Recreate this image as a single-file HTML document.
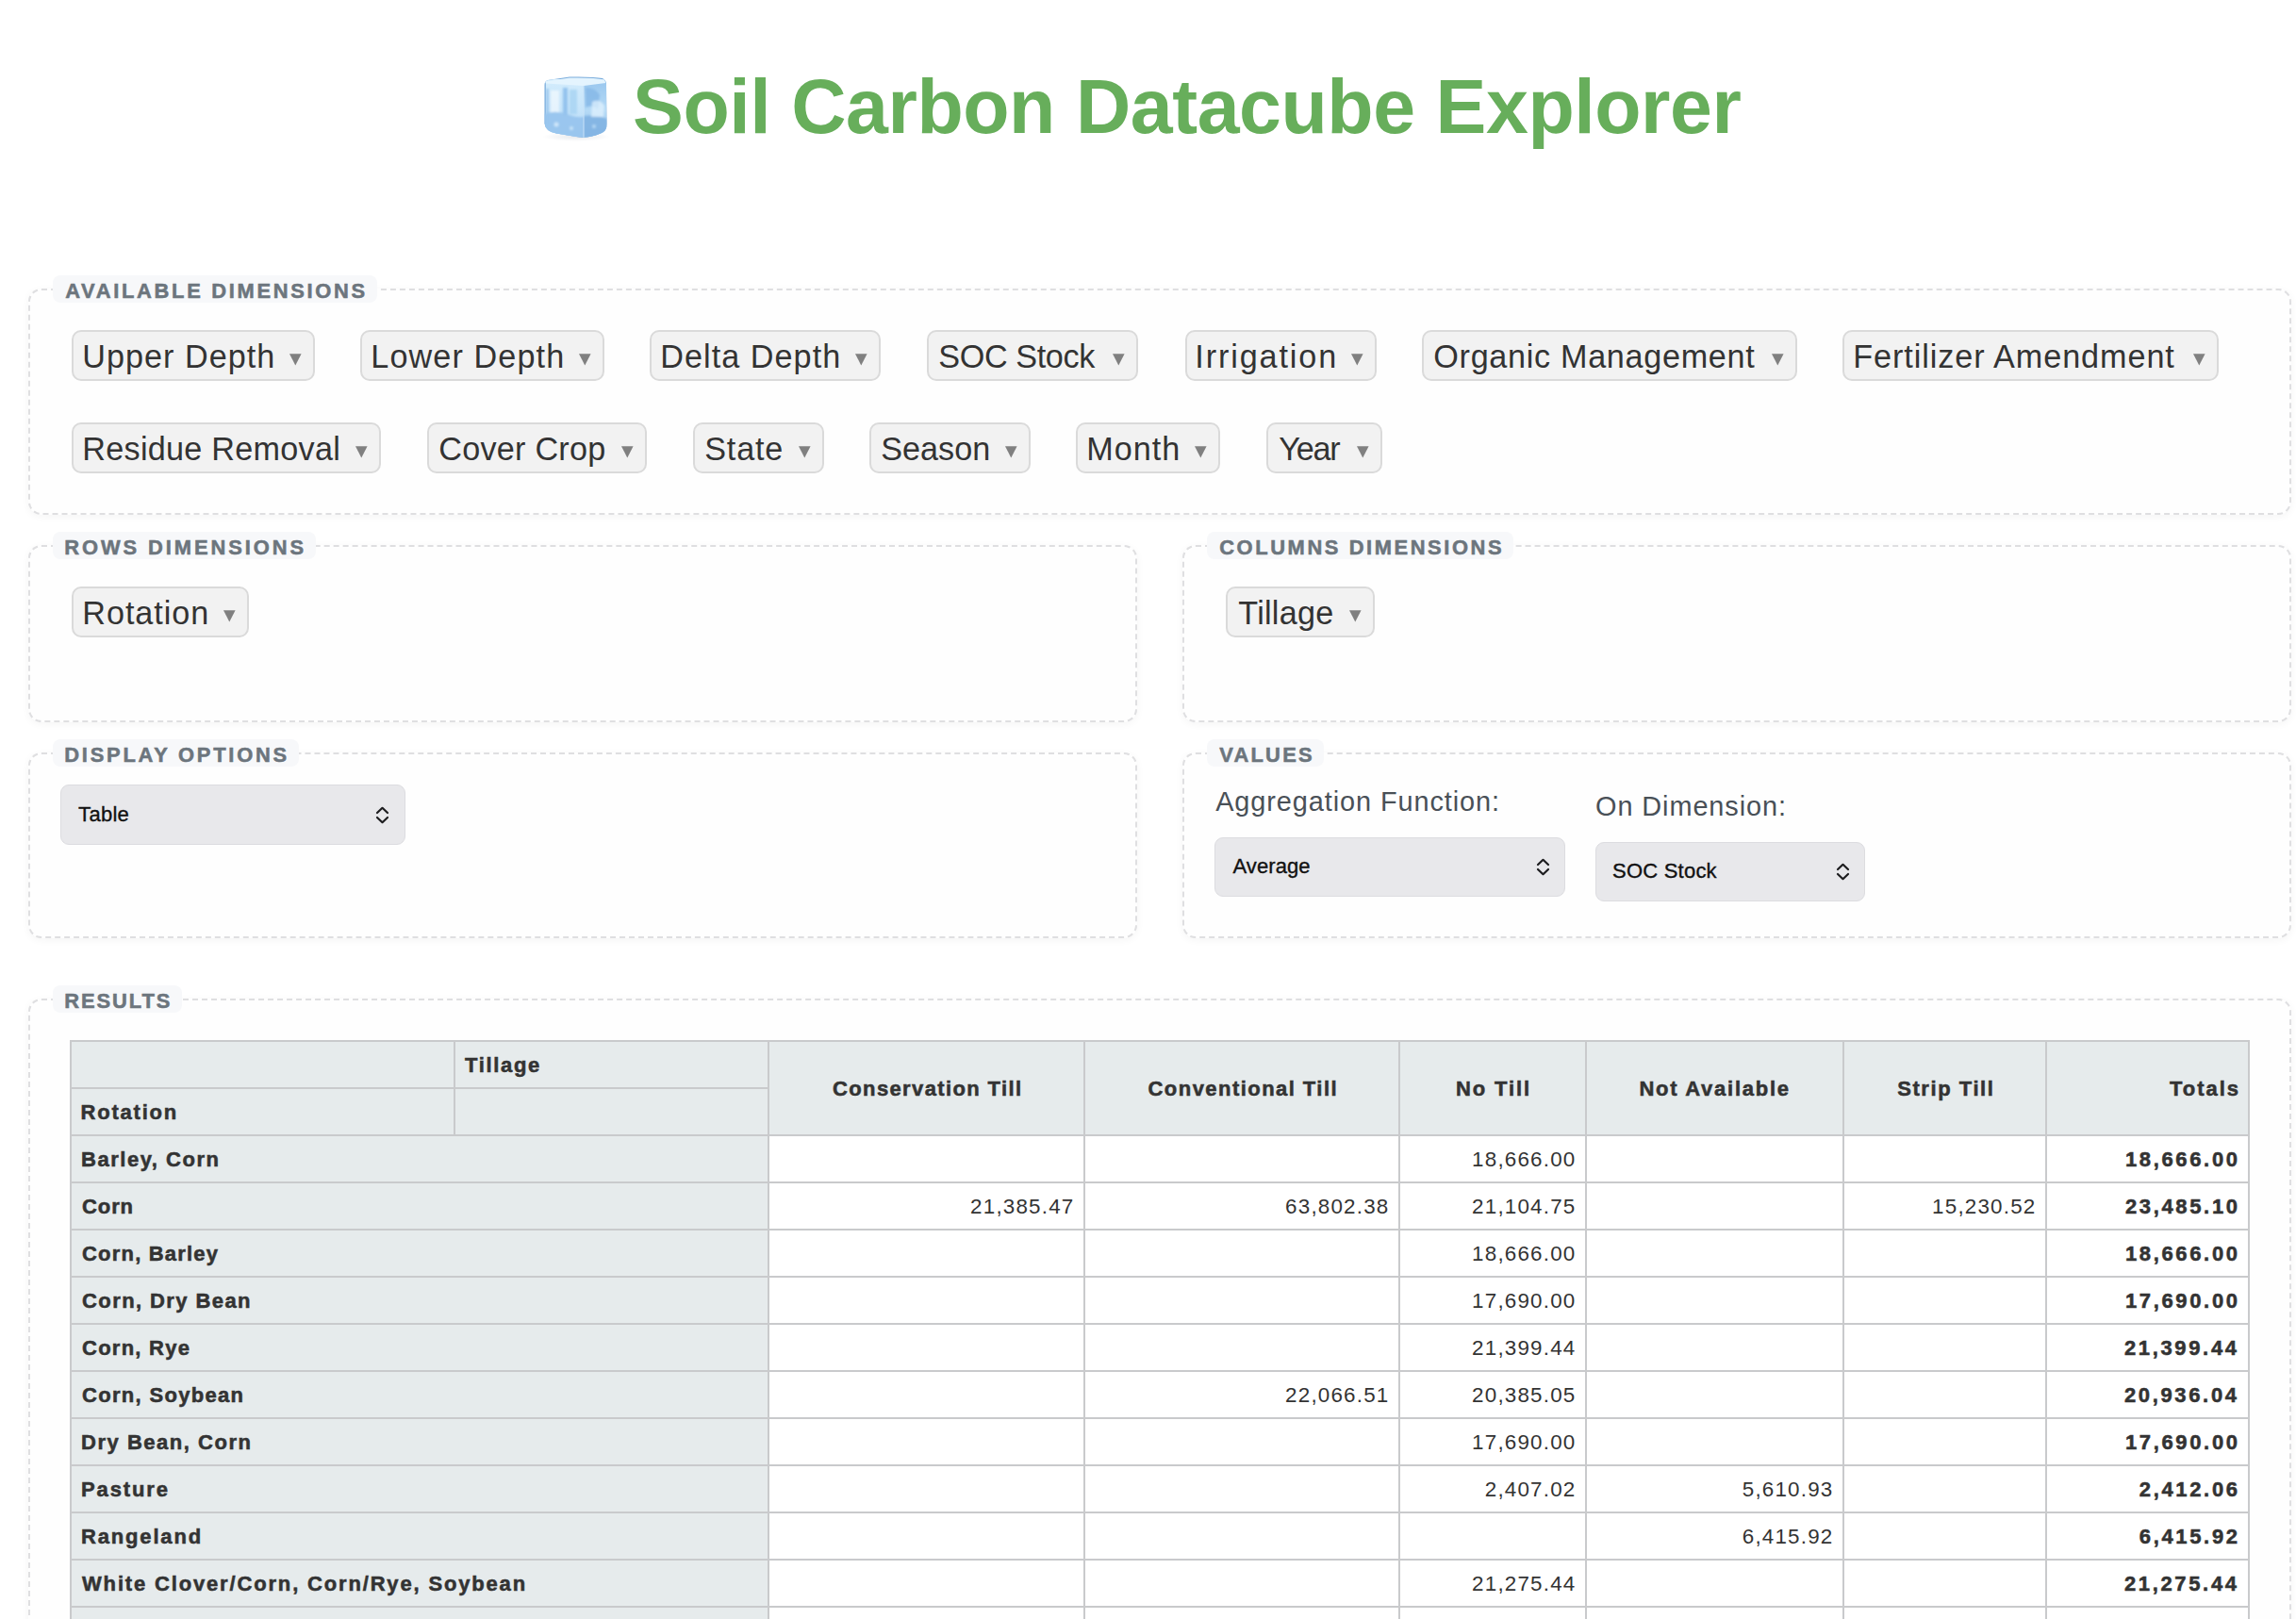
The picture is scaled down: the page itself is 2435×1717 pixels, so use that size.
<!DOCTYPE html>
<html><head><meta charset="utf-8"><title>Soil Carbon Datacube Explorer</title>
<style>
html,body{margin:0;padding:0;background:#fff;width:2435px;height:1717px;overflow:hidden;position:relative;}
body{font-family:"Liberation Sans",sans-serif;}
.t{position:absolute;line-height:1;white-space:nowrap;}
</style></head><body>
<svg style="position:absolute;left:560px;top:70px" width="100" height="90" viewBox="560 70 100 90">
<defs>
<linearGradient id="gf" x1="0" y1="0" x2="0" y2="1"><stop offset="0" stop-color="#d3ecfc"/><stop offset="0.55" stop-color="#c6e4fa"/><stop offset="1" stop-color="#b0d6f4"/></linearGradient>
<linearGradient id="gs" x1="0" y1="0" x2="0" y2="1"><stop offset="0" stop-color="#98c6ee"/><stop offset="0.55" stop-color="#b5daf6"/><stop offset="1" stop-color="#94c2eb"/></linearGradient>
<radialGradient id="gsh" cx="0.5" cy="0.5" r="0.5"><stop offset="0" stop-color="#6d7d90" stop-opacity="0.16"/><stop offset="1" stop-color="#6d7d90" stop-opacity="0"/></radialGradient>
<filter id="bl" x="-20%" y="-20%" width="140%" height="140%"><feGaussianBlur stdDeviation="1.3"/></filter>
<filter id="bl2" x="-10%" y="-10%" width="120%" height="120%"><feGaussianBlur stdDeviation="0.4"/></filter>
<clipPath id="cp"><path d="M577.5 90 Q577.5 86 581 85 L604 81.5 Q630 81 639 83 Q643 85 643 90 L643.5 131 Q644 139 637 141.5 Q626 146.5 614 145.5 L590 141.5 Q578.5 139.5 577.5 131 Z"/></clipPath>
</defs>
<ellipse cx="611" cy="145" rx="36" ry="5" fill="url(#gsh)"/>
<g filter="url(#bl2)">
<path d="M577.5 90 Q577.5 86 581 85 L604 81.5 Q630 81 639 83 Q643 85 643 90 L643.5 131 Q644 139 637 141.5 Q626 146.5 614 145.5 L590 141.5 Q578.5 139.5 577.5 131 Z" fill="#79acdc"/>
<g clip-path="url(#cp)">
<rect x="578.8" y="84" width="40" height="61" fill="url(#gf)"/>
<rect x="619" y="84" width="24" height="61" fill="url(#gs)"/>
<path d="M578 86.5 L604 82.5 Q630 82 641 84.5 L642.3 88 L619 91 L579 88.5 Z" fill="#e4f4fe"/>
<g filter="url(#bl)">
<rect x="597" y="93" width="5" height="30" fill="#8fc0ec" opacity="0.9"/>
<rect x="604" y="95" width="8" height="26" fill="#a8d3f3" opacity="0.8"/>
<rect x="584" y="96" width="9" height="24" fill="#ffffff" opacity="0.55"/>
<rect x="579" y="94" width="3" height="40" fill="#8fbde8" opacity="0.7"/>
<path d="M577 121 Q590 116 604 122 Q612 125 619 124 L619 146 L577 146 Z" fill="#98c5ee" opacity="0.95"/>
<path d="M619 123 Q630 121 644 126 L644 146 L619 146 Z" fill="#83b4e4" opacity="0.95"/>
<path d="M621 93 Q632 93 636 101 L634 116 Q628 110 621 114 Z" fill="#86b8e8" opacity="0.85"/>
<path d="M628 108 Q636 104 641 112 L640 124 L627 124 Z" fill="#e0f1fd" opacity="0.75"/>
<circle cx="590" cy="132" r="2.5" fill="#d8eefd" opacity="0.8"/>
<circle cx="606" cy="136" r="2" fill="#d8eefd" opacity="0.7"/>
<circle cx="630" cy="134" r="2" fill="#c6e4fa" opacity="0.7"/>
</g>
<rect x="618.3" y="90" width="1.3" height="56" fill="#e3f3ff" opacity="0.55"/>
</g>
</g>
</svg>

<div class="t" style="left:671.00px;top:73.17px;font-size:80.7px;font-weight:700;color:#67ae5b;letter-spacing:-0.438px;">Soil Carbon Datacube Explorer</div>
<div style="position:absolute;left:30px;top:306px;width:2400px;height:240px;border:2px dashed #dfdfe1;border-radius:14px;box-shadow:0 2px 8px rgba(0,0,0,0.045);box-sizing:border-box;background:#fefefe;"></div>
<div style="position:absolute;left:55.8px;top:291.8px;width:344.0px;height:29.5px;background:#f7f8fa;border-radius:8px;"></div>
<div class="t" style="left:69.20px;top:297.96px;font-size:21.9px;font-weight:700;color:#6c757d;letter-spacing:2.698px;-webkit-text-stroke:0.55px #6c757d;">AVAILABLE DIMENSIONS</div>
<div style="position:absolute;left:30px;top:578px;width:1176px;height:188px;border:2px dashed #dfdfe1;border-radius:14px;box-shadow:0 2px 8px rgba(0,0,0,0.045);box-sizing:border-box;background:#fefefe;"></div>
<div style="position:absolute;left:55.8px;top:563.8px;width:279.0px;height:29.5px;background:#f7f8fa;border-radius:8px;"></div>
<div class="t" style="left:68.20px;top:569.96px;font-size:21.9px;font-weight:700;color:#6c757d;letter-spacing:2.940px;-webkit-text-stroke:0.55px #6c757d;">ROWS DIMENSIONS</div>
<div style="position:absolute;left:1254px;top:578px;width:1176px;height:188px;border:2px dashed #dfdfe1;border-radius:14px;box-shadow:0 2px 8px rgba(0,0,0,0.045);box-sizing:border-box;background:#fefefe;"></div>
<div style="position:absolute;left:1279.8px;top:563.8px;width:325.4000000000001px;height:29.5px;background:#f7f8fa;border-radius:8px;"></div>
<div class="t" style="left:1293.20px;top:569.96px;font-size:21.9px;font-weight:700;color:#6c757d;letter-spacing:2.588px;-webkit-text-stroke:0.55px #6c757d;">COLUMNS DIMENSIONS</div>
<div style="position:absolute;left:30px;top:798px;width:1176px;height:197px;border:2px dashed #dfdfe1;border-radius:14px;box-shadow:0 2px 8px rgba(0,0,0,0.045);box-sizing:border-box;background:#fefefe;"></div>
<div style="position:absolute;left:55.8px;top:783.8px;width:261.4px;height:29.5px;background:#f7f8fa;border-radius:8px;"></div>
<div class="t" style="left:68.20px;top:789.96px;font-size:21.9px;font-weight:700;color:#6c757d;letter-spacing:2.781px;-webkit-text-stroke:0.55px #6c757d;">DISPLAY OPTIONS</div>
<div style="position:absolute;left:1254px;top:798px;width:1176px;height:197px;border:2px dashed #dfdfe1;border-radius:14px;box-shadow:0 2px 8px rgba(0,0,0,0.045);box-sizing:border-box;background:#fefefe;"></div>
<div style="position:absolute;left:1279.8px;top:783.8px;width:124.40000000000009px;height:29.5px;background:#f7f8fa;border-radius:8px;"></div>
<div class="t" style="left:1293.20px;top:789.96px;font-size:21.9px;font-weight:700;color:#6c757d;letter-spacing:2.247px;-webkit-text-stroke:0.55px #6c757d;">VALUES</div>
<div style="position:absolute;left:30px;top:1059px;width:2400px;height:741px;border:2px dashed #dfdfe1;border-radius:14px;box-shadow:0 2px 8px rgba(0,0,0,0.045);box-sizing:border-box;background:#fefefe;"></div>
<div style="position:absolute;left:55.8px;top:1044.8px;width:137.2px;height:29.5px;background:#f7f8fa;border-radius:8px;"></div>
<div class="t" style="left:68.20px;top:1050.96px;font-size:21.9px;font-weight:700;color:#6c757d;letter-spacing:1.944px;-webkit-text-stroke:0.55px #6c757d;">RESULTS</div>
<div style="position:absolute;left:76px;top:350px;width:258px;height:54px;background:#f2f2f2;border:2px solid #dadada;border-radius:10px;box-sizing:border-box;"></div>
<div class="t" style="left:87.30px;top:361.04px;font-size:34.2px;font-weight:400;color:#333;letter-spacing:1.007px;">Upper Depth</div>
<svg style="position:absolute;left:306.70px;top:375.30px" width="13" height="13" viewBox="0 0 13 13"><polygon points="0,0.3 12.6,0.3 6.3,12.5" fill="#808080"/></svg>
<div style="position:absolute;left:382px;top:350px;width:259px;height:54px;background:#f2f2f2;border:2px solid #dadada;border-radius:10px;box-sizing:border-box;"></div>
<div class="t" style="left:393.30px;top:361.04px;font-size:34.2px;font-weight:400;color:#333;letter-spacing:1.107px;">Lower Depth</div>
<svg style="position:absolute;left:613.70px;top:375.30px" width="13" height="13" viewBox="0 0 13 13"><polygon points="0,0.3 12.6,0.3 6.3,12.5" fill="#808080"/></svg>
<div style="position:absolute;left:689px;top:350px;width:245px;height:54px;background:#f2f2f2;border:2px solid #dadada;border-radius:10px;box-sizing:border-box;"></div>
<div class="t" style="left:700.30px;top:361.04px;font-size:34.2px;font-weight:400;color:#333;letter-spacing:1.038px;">Delta Depth</div>
<svg style="position:absolute;left:906.70px;top:375.30px" width="13" height="13" viewBox="0 0 13 13"><polygon points="0,0.3 12.6,0.3 6.3,12.5" fill="#808080"/></svg>
<div style="position:absolute;left:983px;top:350px;width:224px;height:54px;background:#f2f2f2;border:2px solid #dadada;border-radius:10px;box-sizing:border-box;"></div>
<div class="t" style="left:995.30px;top:361.04px;font-size:34.2px;font-weight:400;color:#333;letter-spacing:-0.386px;">SOC Stock</div>
<svg style="position:absolute;left:1179.70px;top:375.30px" width="13" height="13" viewBox="0 0 13 13"><polygon points="0,0.3 12.6,0.3 6.3,12.5" fill="#808080"/></svg>
<div style="position:absolute;left:1257px;top:350px;width:203px;height:54px;background:#f2f2f2;border:2px solid #dadada;border-radius:10px;box-sizing:border-box;"></div>
<div class="t" style="left:1267.30px;top:361.04px;font-size:34.2px;font-weight:400;color:#333;letter-spacing:1.878px;">Irrigation</div>
<svg style="position:absolute;left:1432.70px;top:375.30px" width="13" height="13" viewBox="0 0 13 13"><polygon points="0,0.3 12.6,0.3 6.3,12.5" fill="#808080"/></svg>
<div style="position:absolute;left:1508px;top:350px;width:398px;height:54px;background:#f2f2f2;border:2px solid #dadada;border-radius:10px;box-sizing:border-box;"></div>
<div class="t" style="left:1520.30px;top:361.04px;font-size:34.2px;font-weight:400;color:#333;letter-spacing:0.685px;">Organic Management</div>
<svg style="position:absolute;left:1878.70px;top:375.30px" width="13" height="13" viewBox="0 0 13 13"><polygon points="0,0.3 12.6,0.3 6.3,12.5" fill="#808080"/></svg>
<div style="position:absolute;left:1954px;top:350px;width:399px;height:54px;background:#f2f2f2;border:2px solid #dadada;border-radius:10px;box-sizing:border-box;"></div>
<div class="t" style="left:1965.30px;top:361.04px;font-size:34.2px;font-weight:400;color:#333;letter-spacing:0.922px;">Fertilizer Amendment</div>
<svg style="position:absolute;left:2325.70px;top:375.30px" width="13" height="13" viewBox="0 0 13 13"><polygon points="0,0.3 12.6,0.3 6.3,12.5" fill="#808080"/></svg>
<div style="position:absolute;left:76px;top:448px;width:328px;height:54px;background:#f2f2f2;border:2px solid #dadada;border-radius:10px;box-sizing:border-box;"></div>
<div class="t" style="left:87.30px;top:459.04px;font-size:34.2px;font-weight:400;color:#333;letter-spacing:0.262px;">Residue Removal</div>
<svg style="position:absolute;left:376.70px;top:473.30px" width="13" height="13" viewBox="0 0 13 13"><polygon points="0,0.3 12.6,0.3 6.3,12.5" fill="#808080"/></svg>
<div style="position:absolute;left:453px;top:448px;width:233px;height:54px;background:#f2f2f2;border:2px solid #dadada;border-radius:10px;box-sizing:border-box;"></div>
<div class="t" style="left:465.30px;top:459.04px;font-size:34.2px;font-weight:400;color:#333;letter-spacing:0.236px;">Cover Crop</div>
<svg style="position:absolute;left:658.70px;top:473.30px" width="13" height="13" viewBox="0 0 13 13"><polygon points="0,0.3 12.6,0.3 6.3,12.5" fill="#808080"/></svg>
<div style="position:absolute;left:735px;top:448px;width:139px;height:54px;background:#f2f2f2;border:2px solid #dadada;border-radius:10px;box-sizing:border-box;"></div>
<div class="t" style="left:747.30px;top:459.04px;font-size:34.2px;font-weight:400;color:#333;letter-spacing:0.772px;">State</div>
<svg style="position:absolute;left:846.70px;top:473.30px" width="13" height="13" viewBox="0 0 13 13"><polygon points="0,0.3 12.6,0.3 6.3,12.5" fill="#808080"/></svg>
<div style="position:absolute;left:922px;top:448px;width:171px;height:54px;background:#f2f2f2;border:2px solid #dadada;border-radius:10px;box-sizing:border-box;"></div>
<div class="t" style="left:934.30px;top:459.04px;font-size:34.2px;font-weight:400;color:#333;letter-spacing:-0.007px;">Season</div>
<svg style="position:absolute;left:1065.70px;top:473.30px" width="13" height="13" viewBox="0 0 13 13"><polygon points="0,0.3 12.6,0.3 6.3,12.5" fill="#808080"/></svg>
<div style="position:absolute;left:1141px;top:448px;width:153px;height:54px;background:#f2f2f2;border:2px solid #dadada;border-radius:10px;box-sizing:border-box;"></div>
<div class="t" style="left:1152.30px;top:459.04px;font-size:34.2px;font-weight:400;color:#333;letter-spacing:0.974px;">Month</div>
<svg style="position:absolute;left:1266.70px;top:473.30px" width="13" height="13" viewBox="0 0 13 13"><polygon points="0,0.3 12.6,0.3 6.3,12.5" fill="#808080"/></svg>
<div style="position:absolute;left:1343px;top:448px;width:123px;height:54px;background:#f2f2f2;border:2px solid #dadada;border-radius:10px;box-sizing:border-box;"></div>
<div class="t" style="left:1356.30px;top:459.04px;font-size:34.2px;font-weight:400;color:#333;letter-spacing:-1.263px;">Year</div>
<svg style="position:absolute;left:1438.70px;top:473.30px" width="13" height="13" viewBox="0 0 13 13"><polygon points="0,0.3 12.6,0.3 6.3,12.5" fill="#808080"/></svg>
<div style="position:absolute;left:76px;top:622px;width:188px;height:54px;background:#f2f2f2;border:2px solid #dadada;border-radius:10px;box-sizing:border-box;"></div>
<div class="t" style="left:87.30px;top:633.04px;font-size:34.2px;font-weight:400;color:#333;letter-spacing:0.940px;">Rotation</div>
<svg style="position:absolute;left:236.70px;top:647.30px" width="13" height="13" viewBox="0 0 13 13"><polygon points="0,0.3 12.6,0.3 6.3,12.5" fill="#808080"/></svg>
<div style="position:absolute;left:1300px;top:622px;width:158px;height:54px;background:#f2f2f2;border:2px solid #dadada;border-radius:10px;box-sizing:border-box;"></div>
<div class="t" style="left:1313.30px;top:633.04px;font-size:34.2px;font-weight:400;color:#333;letter-spacing:0.246px;">Tillage</div>
<svg style="position:absolute;left:1430.70px;top:647.30px" width="13" height="13" viewBox="0 0 13 13"><polygon points="0,0.3 12.6,0.3 6.3,12.5" fill="#808080"/></svg>
<div style="position:absolute;left:64px;top:832px;width:366px;height:64px;background:#e8e8eb;border:1.5px solid #dcdce0;border-radius:9px;box-sizing:border-box;"></div>
<div class="t" style="left:83.10px;top:853.27px;font-size:22px;font-weight:400;color:#111;letter-spacing:0.285px;-webkit-text-stroke:0.35px #111;">Table</div>
<svg style="position:absolute;left:398px;top:854.5px" width="15" height="19" viewBox="0 0 15 19"><path d="M2 7 L7.5 1.8 L13 7 M2 12 L7.5 17.2 L13 12" fill="none" stroke="#1d1d1f" stroke-width="2.2" stroke-linecap="round" stroke-linejoin="round"/></svg>
<div style="position:absolute;left:1288px;top:887.5px;width:371.5px;height:63.0px;background:#e8e8eb;border:1.5px solid #dcdce0;border-radius:9px;box-sizing:border-box;"></div>
<div class="t" style="left:1307.50px;top:907.97px;font-size:22px;font-weight:400;color:#111;letter-spacing:0.082px;-webkit-text-stroke:0.35px #111;">Average</div>
<svg style="position:absolute;left:1628.5px;top:909.5px" width="15" height="19" viewBox="0 0 15 19"><path d="M2 7 L7.5 1.8 L13 7 M2 12 L7.5 17.2 L13 12" fill="none" stroke="#1d1d1f" stroke-width="2.2" stroke-linecap="round" stroke-linejoin="round"/></svg>
<div style="position:absolute;left:1692px;top:892.5px;width:286px;height:63.0px;background:#e8e8eb;border:1.5px solid #dcdce0;border-radius:9px;box-sizing:border-box;"></div>
<div class="t" style="left:1710.00px;top:913.17px;font-size:22px;font-weight:400;color:#111;letter-spacing:0.224px;-webkit-text-stroke:0.35px #111;">SOC Stock</div>
<svg style="position:absolute;left:1946.5px;top:914.5px" width="15" height="19" viewBox="0 0 15 19"><path d="M2 7 L7.5 1.8 L13 7 M2 12 L7.5 17.2 L13 12" fill="none" stroke="#1d1d1f" stroke-width="2.2" stroke-linecap="round" stroke-linejoin="round"/></svg>
<div class="t" style="left:1289.20px;top:835.93px;font-size:28.9px;font-weight:400;color:#495057;letter-spacing:0.908px;">Aggregation Function:</div>
<div class="t" style="left:1692.00px;top:840.83px;font-size:28.9px;font-weight:400;color:#495057;letter-spacing:0.913px;">On Dimension:</div>
<div style="position:absolute;left:74px;top:1103px;width:2312px;height:100px;background:#e6ebec;"></div>
<div style="position:absolute;left:814px;top:1203px;width:1572px;height:514px;background:#fff;"></div>
<div style="position:absolute;left:74px;top:1203px;width:740px;height:514px;background:#e6ebec;"></div>
<div style="position:absolute;left:74px;top:1103px;width:2312px;height:2px;background:#c9cacc;"></div>
<div style="position:absolute;left:74px;top:1153px;width:740px;height:2px;background:#c9cacc;"></div>
<div style="position:absolute;left:74px;top:1203px;width:2312px;height:2px;background:#c9cacc;"></div>
<div style="position:absolute;left:74px;top:1253px;width:2312px;height:2px;background:#c9cacc;"></div>
<div style="position:absolute;left:74px;top:1303px;width:2312px;height:2px;background:#c9cacc;"></div>
<div style="position:absolute;left:74px;top:1353px;width:2312px;height:2px;background:#c9cacc;"></div>
<div style="position:absolute;left:74px;top:1403px;width:2312px;height:2px;background:#c9cacc;"></div>
<div style="position:absolute;left:74px;top:1453px;width:2312px;height:2px;background:#c9cacc;"></div>
<div style="position:absolute;left:74px;top:1503px;width:2312px;height:2px;background:#c9cacc;"></div>
<div style="position:absolute;left:74px;top:1553px;width:2312px;height:2px;background:#c9cacc;"></div>
<div style="position:absolute;left:74px;top:1603px;width:2312px;height:2px;background:#c9cacc;"></div>
<div style="position:absolute;left:74px;top:1653px;width:2312px;height:2px;background:#c9cacc;"></div>
<div style="position:absolute;left:74px;top:1703px;width:2312px;height:2px;background:#c9cacc;"></div>
<div style="position:absolute;left:74px;top:1753px;width:2312px;height:2px;background:#c9cacc;"></div>
<div style="position:absolute;left:74px;top:1103px;width:2px;height:614px;background:#c9cacc;"></div>
<div style="position:absolute;left:481px;top:1103px;width:2px;height:100px;background:#c9cacc;"></div>
<div style="position:absolute;left:814px;top:1103px;width:2px;height:614px;background:#c9cacc;"></div>
<div style="position:absolute;left:1149px;top:1103px;width:2px;height:614px;background:#c9cacc;"></div>
<div style="position:absolute;left:1483px;top:1103px;width:2px;height:614px;background:#c9cacc;"></div>
<div style="position:absolute;left:1681px;top:1103px;width:2px;height:614px;background:#c9cacc;"></div>
<div style="position:absolute;left:1954px;top:1103px;width:2px;height:614px;background:#c9cacc;"></div>
<div style="position:absolute;left:2169px;top:1103px;width:2px;height:614px;background:#c9cacc;"></div>
<div style="position:absolute;left:2384px;top:1103px;width:2px;height:614px;background:#c9cacc;"></div>
<div class="t" style="left:493.00px;top:1118.97px;font-size:22.0px;font-weight:700;color:#333;letter-spacing:1.658px;-webkit-text-stroke:0.55px #333;">Tillage</div>
<div class="t" style="left:85.50px;top:1168.97px;font-size:22.0px;font-weight:700;color:#333;letter-spacing:1.791px;-webkit-text-stroke:0.55px #333;">Rotation</div>
<div class="t" style="left:883.00px;top:1144.07px;font-size:22.0px;font-weight:700;color:#333;letter-spacing:1.377px;-webkit-text-stroke:0.55px #333;">Conservation Till</div>
<div class="t" style="left:1217.50px;top:1144.07px;font-size:22.0px;font-weight:700;color:#333;letter-spacing:1.455px;-webkit-text-stroke:0.55px #333;">Conventional Till</div>
<div class="t" style="left:1544.05px;top:1144.07px;font-size:22.0px;font-weight:700;color:#333;letter-spacing:1.866px;-webkit-text-stroke:0.55px #333;">No Till</div>
<div class="t" style="left:1738.40px;top:1144.07px;font-size:22.0px;font-weight:700;color:#333;letter-spacing:1.740px;-webkit-text-stroke:0.55px #333;">Not Available</div>
<div class="t" style="left:2012.20px;top:1144.07px;font-size:22.0px;font-weight:700;color:#333;letter-spacing:1.568px;-webkit-text-stroke:0.55px #333;">Strip Till</div>
<div class="t" style="left:2301.00px;top:1144.07px;font-size:22.0px;font-weight:700;color:#333;letter-spacing:1.956px;-webkit-text-stroke:0.55px #333;">Totals</div>
<div class="t" style="left:86.00px;top:1218.97px;font-size:22.0px;font-weight:700;color:#333;letter-spacing:1.532px;-webkit-text-stroke:0.55px #333;">Barley, Corn</div>
<div class="t" style="left:1561.12px;top:1218.63px;font-size:22.4px;font-weight:400;color:#333;letter-spacing:1.190px;">18,666.00</div>
<div class="t" style="left:2253.88px;top:1218.97px;font-size:22.0px;font-weight:700;color:#333;letter-spacing:2.660px;-webkit-text-stroke:0.55px #333;">18,666.00</div>
<div class="t" style="left:87.00px;top:1268.97px;font-size:22.0px;font-weight:700;color:#333;letter-spacing:0.904px;-webkit-text-stroke:0.55px #333;">Corn</div>
<div class="t" style="left:1029.12px;top:1268.63px;font-size:22.4px;font-weight:400;color:#333;letter-spacing:1.190px;">21,385.47</div>
<div class="t" style="left:1363.12px;top:1268.63px;font-size:22.4px;font-weight:400;color:#333;letter-spacing:1.190px;">63,802.38</div>
<div class="t" style="left:1561.12px;top:1268.63px;font-size:22.4px;font-weight:400;color:#333;letter-spacing:1.190px;">21,104.75</div>
<div class="t" style="left:2049.12px;top:1268.63px;font-size:22.4px;font-weight:400;color:#333;letter-spacing:1.190px;">15,230.52</div>
<div class="t" style="left:2253.88px;top:1268.97px;font-size:22.0px;font-weight:700;color:#333;letter-spacing:2.660px;-webkit-text-stroke:0.55px #333;">23,485.10</div>
<div class="t" style="left:87.00px;top:1318.97px;font-size:22.0px;font-weight:700;color:#333;letter-spacing:1.202px;-webkit-text-stroke:0.55px #333;">Corn, Barley</div>
<div class="t" style="left:1561.12px;top:1318.63px;font-size:22.4px;font-weight:400;color:#333;letter-spacing:1.190px;">18,666.00</div>
<div class="t" style="left:2253.88px;top:1318.97px;font-size:22.0px;font-weight:700;color:#333;letter-spacing:2.660px;-webkit-text-stroke:0.55px #333;">18,666.00</div>
<div class="t" style="left:87.00px;top:1368.97px;font-size:22.0px;font-weight:700;color:#333;letter-spacing:1.415px;-webkit-text-stroke:0.55px #333;">Corn, Dry Bean</div>
<div class="t" style="left:1561.12px;top:1368.63px;font-size:22.4px;font-weight:400;color:#333;letter-spacing:1.190px;">17,690.00</div>
<div class="t" style="left:2253.88px;top:1368.97px;font-size:22.0px;font-weight:700;color:#333;letter-spacing:2.660px;-webkit-text-stroke:0.55px #333;">17,690.00</div>
<div class="t" style="left:87.00px;top:1418.97px;font-size:22.0px;font-weight:700;color:#333;letter-spacing:1.253px;-webkit-text-stroke:0.55px #333;">Corn, Rye</div>
<div class="t" style="left:1561.12px;top:1418.63px;font-size:22.4px;font-weight:400;color:#333;letter-spacing:1.190px;">21,399.44</div>
<div class="t" style="left:2252.88px;top:1418.97px;font-size:22.0px;font-weight:700;color:#333;letter-spacing:2.660px;-webkit-text-stroke:0.55px #333;">21,399.44</div>
<div class="t" style="left:87.00px;top:1468.97px;font-size:22.0px;font-weight:700;color:#333;letter-spacing:1.308px;-webkit-text-stroke:0.55px #333;">Corn, Soybean</div>
<div class="t" style="left:1363.12px;top:1468.63px;font-size:22.4px;font-weight:400;color:#333;letter-spacing:1.190px;">22,066.51</div>
<div class="t" style="left:1561.12px;top:1468.63px;font-size:22.4px;font-weight:400;color:#333;letter-spacing:1.190px;">20,385.05</div>
<div class="t" style="left:2252.88px;top:1468.97px;font-size:22.0px;font-weight:700;color:#333;letter-spacing:2.660px;-webkit-text-stroke:0.55px #333;">20,936.04</div>
<div class="t" style="left:86.00px;top:1518.97px;font-size:22.0px;font-weight:700;color:#333;letter-spacing:1.530px;-webkit-text-stroke:0.55px #333;">Dry Bean, Corn</div>
<div class="t" style="left:1561.12px;top:1518.63px;font-size:22.4px;font-weight:400;color:#333;letter-spacing:1.190px;">17,690.00</div>
<div class="t" style="left:2253.88px;top:1518.97px;font-size:22.0px;font-weight:700;color:#333;letter-spacing:2.660px;-webkit-text-stroke:0.55px #333;">17,690.00</div>
<div class="t" style="left:86.00px;top:1568.97px;font-size:22.0px;font-weight:700;color:#333;letter-spacing:1.872px;-webkit-text-stroke:0.55px #333;">Pasture</div>
<div class="t" style="left:1574.77px;top:1568.63px;font-size:22.4px;font-weight:400;color:#333;letter-spacing:1.190px;">2,407.02</div>
<div class="t" style="left:1847.77px;top:1568.63px;font-size:22.4px;font-weight:400;color:#333;letter-spacing:1.190px;">5,610.93</div>
<div class="t" style="left:2268.78px;top:1568.97px;font-size:22.0px;font-weight:700;color:#333;letter-spacing:2.660px;-webkit-text-stroke:0.55px #333;">2,412.06</div>
<div class="t" style="left:86.00px;top:1618.97px;font-size:22.0px;font-weight:700;color:#333;letter-spacing:1.835px;-webkit-text-stroke:0.55px #333;">Rangeland</div>
<div class="t" style="left:1847.77px;top:1618.63px;font-size:22.4px;font-weight:400;color:#333;letter-spacing:1.190px;">6,415.92</div>
<div class="t" style="left:2268.78px;top:1618.97px;font-size:22.0px;font-weight:700;color:#333;letter-spacing:2.660px;-webkit-text-stroke:0.55px #333;">6,415.92</div>
<div class="t" style="left:87.00px;top:1668.97px;font-size:22.0px;font-weight:700;color:#333;letter-spacing:1.837px;-webkit-text-stroke:0.55px #333;">White Clover/Corn, Corn/Rye, Soybean</div>
<div class="t" style="left:1561.12px;top:1668.63px;font-size:22.4px;font-weight:400;color:#333;letter-spacing:1.190px;">21,275.44</div>
<div class="t" style="left:2252.88px;top:1668.97px;font-size:22.0px;font-weight:700;color:#333;letter-spacing:2.660px;-webkit-text-stroke:0.55px #333;">21,275.44</div>
</body></html>
